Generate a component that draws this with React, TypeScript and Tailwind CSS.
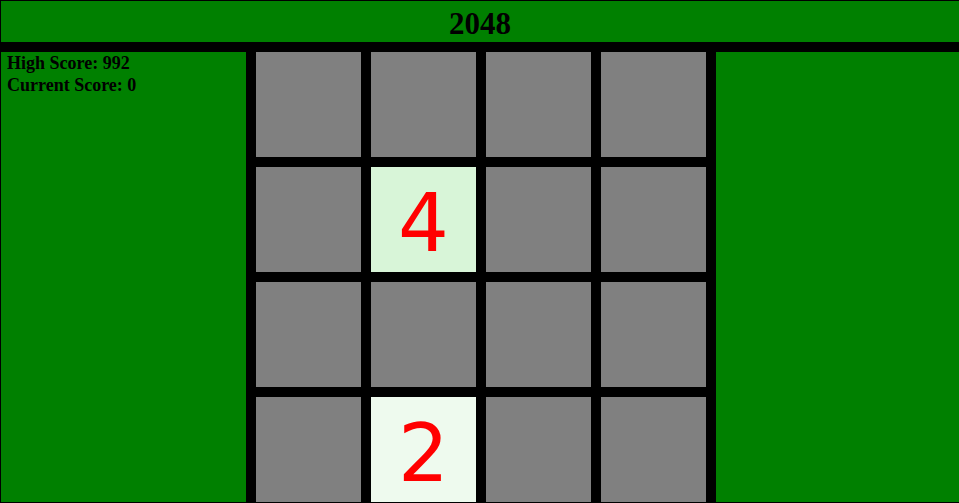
import React from "react";

const board: (number | null)[][] = [
  [null, null, null, null],
  [null, 4, null, null],
  [null, null, null, null],
  [null, 2, null, null],
];

function tileClass(v: number | null) {
  if (v === 2) return "bg-[#eefaee]";
  if (v === 4) return "bg-[#d8f5d8]";
  return "bg-[#808080]";
}

export default function App() {
  return (
    <div className="w-full h-[503px] overflow-hidden bg-black pl-[1px] pt-[1px] flex flex-col">
      <div className="h-[41px] bg-[#008000] flex items-center justify-center pt-[4px]">
        <h1 className="text-[31px] leading-none font-bold text-black font-['Liberation_Serif',serif]">
          2048
        </h1>
      </div>
      <div className="h-[10px] bg-black" />
      <div className="flex h-[450px]">
        <div className="w-[245px] bg-[#008000] pl-[6px] text-[18px] leading-[22px] font-bold text-black font-['Liberation_Serif',serif]">
          <div>High Score: 992</div>
          <div>Current Score: 0</div>
        </div>
        <div className="w-[470px] bg-black px-[10px] grid grid-cols-[repeat(4,105px)] grid-rows-[repeat(4,105px)] gap-[10px]">
          {board.flat().map((v, i) => (
            <div
              key={i}
              className={`${tileClass(v)} flex items-center justify-center pt-[8px] text-[80px] leading-none text-[#ff0000] font-['DejaVu_Sans',sans-serif]`}
            >
              {v ?? ""}
            </div>
          ))}
        </div>
        <div className="flex-1 bg-[#008000]" />
      </div>
    </div>
  );
}
